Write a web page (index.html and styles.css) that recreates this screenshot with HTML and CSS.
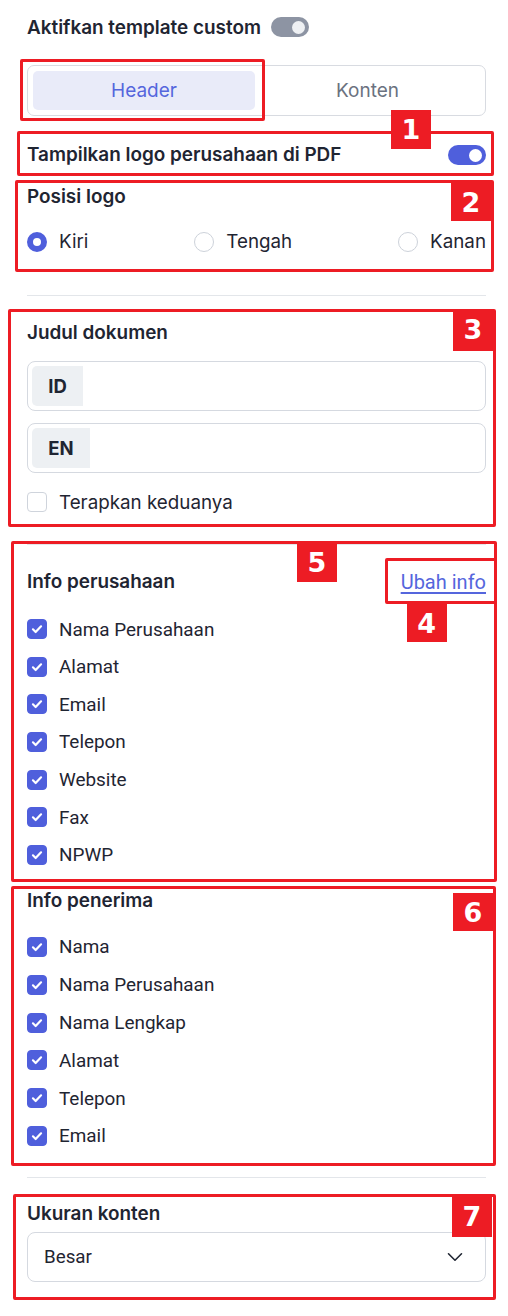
FILE: index.html
```html
<!DOCTYPE html>
<html lang="id">
<head>
<meta charset="utf-8">
<title>Template custom</title>
<link rel="stylesheet" href="styles.css">
</head>
<body>
<main class="panel">
  <div class="title-row">
    <span class="title">Aktifkan template custom</span>
    <span class="toggle toggle-off"><span class="knob"></span></span>
  </div>

  <div class="tabs anno">
    <div class="tab tab-active">Header</div>
    <div class="tab">Konten</div>
    <span class="box box-tabs"></span>
  </div>

  <div class="logo-row anno">
    <span class="label">Tampilkan logo perusahaan di PDF</span>
    <span class="toggle toggle-on"><span class="knob"></span></span>
    <span class="box box-1"></span>
    <span class="badge badge-1">1</span>
  </div>

  <section class="posisi anno">
    <div class="label">Posisi logo</div>
    <div class="radios">
      <label class="radio-item"><span class="radio radio-on"></span>Kiri</label>
      <label class="radio-item"><span class="radio"></span>Tengah</label>
      <label class="radio-item"><span class="radio"></span>Kanan</label>
    </div>
    <span class="box box-2"></span>
    <span class="badge badge-2">2</span>
  </section>

  <hr class="divider div-1">

  <section class="judul anno">
    <div class="label">Judul dokumen</div>
    <div class="field field-first"><span class="addon addon-id">ID</span></div>
    <div class="field field-second"><span class="addon addon-en">EN</span></div>
    <label class="check-row check-apply"><span class="checkbox"></span><span class="check-text">Terapkan keduanya</span></label>
    <span class="box box-3"></span>
    <span class="badge badge-3">3</span>
  </section>

  <hr class="divider div-2">

  <section class="info anno">
    <div class="info-head">
      <span class="label">Info perusahaan</span>
      <span class="link-wrap anno">
        <a class="link" href="#">Ubah info</a>
        <span class="box box-4"></span>
        <span class="badge badge-4">4</span>
      </span>
    </div>
    <ul class="checks checks-a">
      <li class="check-row"><span class="checkbox checkbox-on"><svg viewBox="0 0 20 20"><path d="M5.5 10.4l3 3 6-6.4"/></svg></span><span class="item-text">Nama Perusahaan</span></li>
      <li class="check-row"><span class="checkbox checkbox-on"><svg viewBox="0 0 20 20"><path d="M5.5 10.4l3 3 6-6.4"/></svg></span><span class="item-text">Alamat</span></li>
      <li class="check-row"><span class="checkbox checkbox-on"><svg viewBox="0 0 20 20"><path d="M5.5 10.4l3 3 6-6.4"/></svg></span><span class="item-text">Email</span></li>
      <li class="check-row"><span class="checkbox checkbox-on"><svg viewBox="0 0 20 20"><path d="M5.5 10.4l3 3 6-6.4"/></svg></span><span class="item-text">Telepon</span></li>
      <li class="check-row"><span class="checkbox checkbox-on"><svg viewBox="0 0 20 20"><path d="M5.5 10.4l3 3 6-6.4"/></svg></span><span class="item-text">Website</span></li>
      <li class="check-row"><span class="checkbox checkbox-on"><svg viewBox="0 0 20 20"><path d="M5.5 10.4l3 3 6-6.4"/></svg></span><span class="item-text">Fax</span></li>
      <li class="check-row"><span class="checkbox checkbox-on"><svg viewBox="0 0 20 20"><path d="M5.5 10.4l3 3 6-6.4"/></svg></span><span class="item-text">NPWP</span></li>
    </ul>
    <span class="box box-5"></span>
    <span class="badge badge-5">5</span>
  </section>

  <section class="penerima anno">
    <div class="label">Info penerima</div>
    <ul class="checks checks-b">
      <li class="check-row"><span class="checkbox checkbox-on"><svg viewBox="0 0 20 20"><path d="M5.5 10.4l3 3 6-6.4"/></svg></span><span class="item-text">Nama</span></li>
      <li class="check-row"><span class="checkbox checkbox-on"><svg viewBox="0 0 20 20"><path d="M5.5 10.4l3 3 6-6.4"/></svg></span><span class="item-text">Nama Perusahaan</span></li>
      <li class="check-row"><span class="checkbox checkbox-on"><svg viewBox="0 0 20 20"><path d="M5.5 10.4l3 3 6-6.4"/></svg></span><span class="item-text">Nama Lengkap</span></li>
      <li class="check-row"><span class="checkbox checkbox-on"><svg viewBox="0 0 20 20"><path d="M5.5 10.4l3 3 6-6.4"/></svg></span><span class="item-text">Alamat</span></li>
      <li class="check-row"><span class="checkbox checkbox-on"><svg viewBox="0 0 20 20"><path d="M5.5 10.4l3 3 6-6.4"/></svg></span><span class="item-text">Telepon</span></li>
      <li class="check-row"><span class="checkbox checkbox-on"><svg viewBox="0 0 20 20"><path d="M5.5 10.4l3 3 6-6.4"/></svg></span><span class="item-text">Email</span></li>
    </ul>
    <span class="box box-6"></span>
    <span class="badge badge-6">6</span>
  </section>

  <hr class="divider div-3">

  <section class="ukuran anno">
    <div class="label">Ukuran konten</div>
    <div class="select">
      <span class="select-value">Besar</span>
      <svg class="chevron" viewBox="0 0 16 10"><path d="M1.5 1.8l6.5 6.4 6.5-6.4"/></svg>
    </div>
    <span class="box box-7"></span>
    <span class="badge badge-7">7</span>
  </section>
</main>
</body>
</html>
```

FILE: styles.css
```css
* { box-sizing: border-box; }

html, body {
  margin: 0;
  padding: 0;
  background: #ffffff;
}

body {
  font-family: Inter, "Noto Sans", sans-serif;
  color: #1f2532;
  width: 508px;
}

.panel {
  width: 459px;
  margin-left: 27px;
  padding-top: 15px;
  padding-bottom: 40px;
}

.anno { position: relative; }

.box {
  position: absolute;
  border: 3px solid #ed1c24;
  border-radius: 2px;
  pointer-events: none;
}

.badge {
  position: absolute;
  width: 40px;
  height: 39px;
  background: #ed1c24;
  color: #ffffff;
  font-family: "DejaVu Sans", Verdana, sans-serif;
  font-weight: bold;
  font-size: 27px;
  line-height: 39px;
  text-align: center;
}

/* title */
.title-row {
  display: flex;
  align-items: center;
  height: 24px;
  gap: 10px;
}
.title {
  font-size: 18.9px;
  font-weight: 600;
}

.toggle {
  position: relative;
  display: inline-flex;
  align-items: center;
  justify-content: flex-end;
  width: 38px;
  height: 20px;
  border-radius: 10px;
  padding: 0 4px;
}
.toggle .knob {
  width: 13px;
  height: 13px;
  border-radius: 50%;
  background: #eef0f3;
}
.toggle-off { background: #8d94a3; }
.toggle-on { background: #4f5fdc; }
.toggle-on .knob { background: #ffffff; }

/* tabs */
.tabs {
  margin-top: 26px;
  height: 51px;
  border: 1px solid #d8dbe1;
  border-radius: 7px;
  padding: 5px;
  display: grid;
  grid-template-columns: 222px 1fr;
  gap: 0;
}
.tab {
  display: flex;
  align-items: center;
  justify-content: center;
  font-size: 19px;
  color: #6b7280;
  border-radius: 5px;
}
.tab-active {
  background: #e9ebf9;
  color: #5566dd;
}
.box-tabs { left: -8px; top: -7px; width: 245px; height: 62px; }

/* logo row */
.logo-row {
  margin-top: 27px;
  height: 24px;
  display: flex;
  align-items: center;
  justify-content: space-between;
}
.label {
  font-size: 18.9px;
  font-weight: 600;
  line-height: 24px;
}
.box-1 { left: -10px; top: -12px; right: -8px; bottom: -9px; }
.badge-1 { left: 364px; top: -33px; }

/* posisi */
.posisi { margin-top: 18px; }
.radios {
  margin-top: 21px;
  display: flex;
  justify-content: space-between;
  height: 24px;
}
.radio-item {
  display: flex;
  align-items: center;
  gap: 12px;
  font-size: 18.8px;
  line-height: 24px;
  color: #1f2532;
}
.radio {
  width: 20px;
  height: 20px;
  border-radius: 50%;
  border: 1.5px solid #cdd2da;
  background: #ffffff;
}
.radio-on {
  border: 6px solid #4f5fdc;
}
.box-2 { left: -12px; top: -5px; right: -8px; bottom: -18px; }
.badge-2 { right: -5px; top: -2px; height: 38px; }

/* divider */
.divider {
  border: 0;
  border-top: 1px solid #e3e6ea;
  margin: 0;
  height: 0;
}
.div-1 { margin-top: 41px; }
.div-2 { margin-top: 30px; }
.div-3 { margin-top: 29px; }

/* judul */
.judul { margin-top: 25px; }
.field {
  height: 50px;
  border: 1px solid #d5d9e0;
  border-radius: 8px;
  padding: 4px;
  display: flex;
}
.field-first { margin-top: 16px; }
.field-second { margin-top: 12px; }
.addon {
  display: flex;
  align-items: center;
  justify-content: center;
  background: #edf0f3;
  border-radius: 5px 0 0 5px;
  font-size: 18.5px;
  font-weight: 700;
}
.addon-id { width: 51px; }
.addon-en { width: 58px; }

.check-row {
  display: flex;
  align-items: center;
  gap: 12px;
  height: 24px;
  font-size: 18.8px;
}
.check-apply { margin-top: 17px; }
.checkbox {
  width: 20px;
  height: 20px;
  border-radius: 4px;
  border: 1.5px solid #cfd4dc;
  background: #ffffff;
  display: flex;
  align-items: center;
  justify-content: center;
  flex: none;
}
.checkbox-on {
  background: #4f5fdc;
  border-color: #4f5fdc;
}
.checkbox svg {
  width: 20px;
  height: 20px;
  fill: none;
  stroke: #ffffff;
  stroke-width: 2.4;
  stroke-linecap: round;
  stroke-linejoin: round;
}
.item-text {
  font-family: Roboto, "Noto Sans", sans-serif;
  font-size: 18.9px;
  color: #1f2532;
}
.box-3 { left: -19px; top: -12px; right: -10px; bottom: -13px; }
.badge-3 { right: -7px; top: -11px; height: 41px; }

/* info perusahaan */
.info { margin-top: 25px; }
.info-head {
  display: flex;
  justify-content: space-between;
  align-items: center;
  height: 24px;
}
.link-wrap { display: inline-block; }
.link {
  font-family: Roboto, "Noto Sans", sans-serif;
  font-size: 20px;
  color: #5566dd;
  text-decoration: underline;
  text-underline-offset: 3px;
}
.box-4 { left: -16px; top: -12px; right: -11px; bottom: -10px; }
.badge-4 { left: 6px; top: 34px; height: 38px; }

.checks {
  list-style: none;
  margin: 0;
  padding: 0;
  display: flex;
  flex-direction: column;
}
.checks-a { margin-top: 23px; gap: 13.67px; }
.checks-b { margin-top: 22px; gap: 13.8px; }

.box-5 { left: -16px; top: -29px; right: -11px; bottom: -15px; }
.badge-5 { left: 270px; top: -27px; }

/* info penerima */
.penerima { margin-top: 22px; }
.box-6 { left: -16px; top: -3px; right: -10px; bottom: -18px; }
.badge-6 { right: -7px; top: 4px; height: 38px; }

/* ukuran */
.ukuran { margin-top: 24px; }
.select {
  margin-top: 6px;
  height: 50px;
  border: 1px solid #d5d9e0;
  border-radius: 8px;
  display: flex;
  align-items: center;
  justify-content: space-between;
  padding: 0 22px 0 16px;
}
.select-value {
  font-family: Roboto, "Noto Sans", sans-serif;
  font-size: 18.8px;
}
.chevron {
  width: 16px;
  height: 10px;
  fill: none;
  stroke: #1f2532;
  stroke-width: 1.6;
  stroke-linecap: round;
  stroke-linejoin: round;
}
.box-7 { left: -14px; top: -8px; right: -10px; bottom: -18px; }
.badge-7 { right: -6px; top: -5px; height: 40px; }
```
